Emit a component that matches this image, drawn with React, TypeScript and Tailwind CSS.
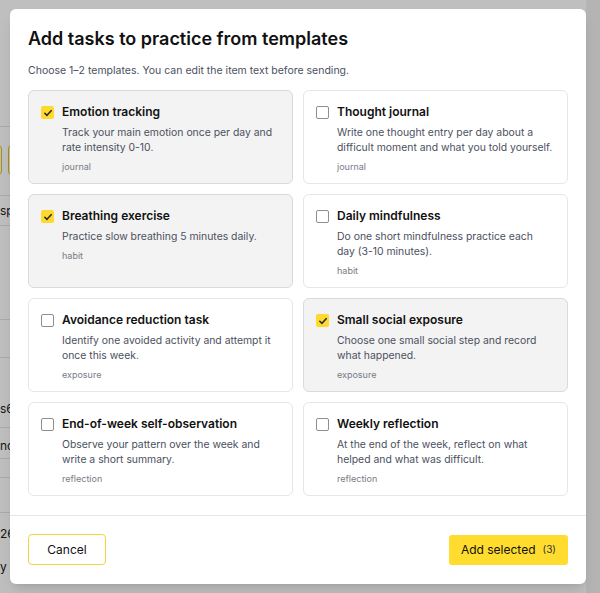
import { useState } from 'react';

interface Template {
  id: string;
  title: string;
  description: string;
  tag: string;
}

const templates: Template[] = [
  { id: 'emotion', title: 'Emotion tracking', description: 'Track your main emotion once per day and rate intensity 0-10.', tag: 'journal' },
  { id: 'thought', title: 'Thought journal', description: 'Write one thought entry per day about a difficult moment and what you told yourself.', tag: 'journal' },
  { id: 'breathing', title: 'Breathing exercise', description: 'Practice slow breathing 5 minutes daily.', tag: 'habit' },
  { id: 'mindful', title: 'Daily mindfulness', description: 'Do one short mindfulness practice each\nday (3-10 minutes).', tag: 'habit' },
  { id: 'avoidance', title: 'Avoidance reduction task', description: 'Identify one avoided activity and attempt it once this week.', tag: 'exposure' },
  { id: 'social', title: 'Small social exposure', description: 'Choose one small social step and record what happened.', tag: 'exposure' },
  { id: 'eow', title: 'End-of-week self-observation', description: 'Observe your pattern over the week and write a short summary.', tag: 'reflection' },
  { id: 'weekly', title: 'Weekly reflection', description: 'At the end of the week, reflect on what helped and what was difficult.', tag: 'reflection' },
];

function Checkbox({ checked }: { checked: boolean }) {
  if (checked) {
    return (
      <span className="mt-[3px] flex h-[13px] w-[13px] flex-shrink-0 items-center justify-center rounded-[2px] bg-[#ffd92e]">
        <svg viewBox="0 0 12 12" className="h-[10px] w-[10px]" fill="none">
          <path d="M2.2 6.3 4.8 8.8 9.8 3.2" stroke="#2b2b2b" strokeWidth="1.9" strokeLinecap="round" strokeLinejoin="round" />
        </svg>
      </span>
    );
  }
  return <span className="mt-[3px] h-[13px] w-[13px] flex-shrink-0 rounded-[2px] border border-[#8e8e8e] bg-white" />;
}

function TemplateCard({ item, checked, onToggle }: { item: Template; checked: boolean; onToggle: () => void }) {
  return (
    <button
      type="button"
      onClick={onToggle}
      className={`flex gap-2 rounded-md border px-[12px] pt-[12px] pb-[9px] text-left ${
        checked ? 'border-[#dadada] bg-[#f3f3f3]' : 'border-[#e6e6e6] bg-white'
      }`}
    >
      <Checkbox checked={checked} />
      <div className="flex flex-col">
        <span className="text-[12px] font-semibold leading-[18px] text-[#111]">{item.title}</span>
        <p className="mt-[4px] whitespace-pre-line text-[10.4px] leading-[15px] text-[#4b5060]">{item.description}</p>
        <span className="mt-[5px] text-[9px] leading-[14px] text-[#777b84]">{item.tag}</span>
      </div>
    </button>
  );
}

export default function App() {
  const [selected, setSelected] = useState<string[]>(['emotion', 'breathing', 'social']);
  const toggle = (id: string) =>
    setSelected((s) => (s.includes(id) ? s.filter((x) => x !== id) : [...s, id]));

  const rows = [126, 195, 225, 319, 357, 427, 458, 477, 512];

  return (
    <div className="relative h-[593px] w-[600px] overflow-hidden bg-white font-['Inter',sans-serif]">
      {/* page behind the dialog */}
      <div className="flex h-full">
        <div className="relative flex-1 text-[12px] text-[#222]">
          {rows.map((y) => (
            <div key={y} className="absolute left-0 h-px w-[40px] bg-[#e5e5e5]" style={{ top: y }} />
          ))}
          <div className="absolute top-[145px] left-[-6px] h-[30px] w-[8px] rounded border border-[#e6c200]" />
          <div className="absolute top-[145px] left-[8px] h-[30px] w-[30px] rounded border border-[#e6c200]" />
          <span className="absolute top-[202px] left-0">sp</span>
          <span className="absolute top-[400px] left-0">s6</span>
          <span className="absolute top-[437px] left-0">nd</span>
          <span className="absolute top-[525px] left-0">26</span>
          <span className="absolute top-[558px] left-0">y</span>
        </div>
        <div className="w-[14px] bg-[#f0f0f0]" />
      </div>
      <div className="absolute inset-0 bg-black/25" />

      {/* dialog */}
      <div className="absolute inset-0 pt-[9px] pl-[10px]">
        <div className="flex h-[575px] w-[576px] flex-col rounded-md bg-white shadow-lg">
          <div className="px-[18px] pt-[18px]">
            <h2 className="text-[18px] font-semibold leading-[24px] text-[#111]">Add tasks to practice from templates</h2>
            <p className="mt-[12px] text-[10.5px] leading-[16px] text-[#4b5060]">
              Choose 1–2 templates. You can edit the item text before sending.
            </p>
            <div className="mt-[11px] grid grid-cols-2 gap-[10px]">
              {templates.map((t) => (
                <TemplateCard key={t.id} item={t} checked={selected.includes(t.id)} onToggle={() => toggle(t.id)} />
              ))}
            </div>
          </div>
          <div className="mt-auto flex items-center justify-between border-t border-[#e6e6e6] px-[18px] pt-[18px] pb-[19px]">
            <button
              type="button"
              className="h-[31px] w-[78px] rounded-[4px] border border-[#f2d33a] bg-white text-[12px] text-[#111]"
            >
              Cancel
            </button>
            <button
              type="button"
              className="flex h-[30px] items-center gap-[7px] rounded-[3px] bg-[#ffdc2e] px-[12px] text-[12px] text-[#111]"
            >
              Add selected
              <span className="text-[10px] text-[#333]">(3)</span>
            </button>
          </div>
        </div>
      </div>
    </div>
  );
}
